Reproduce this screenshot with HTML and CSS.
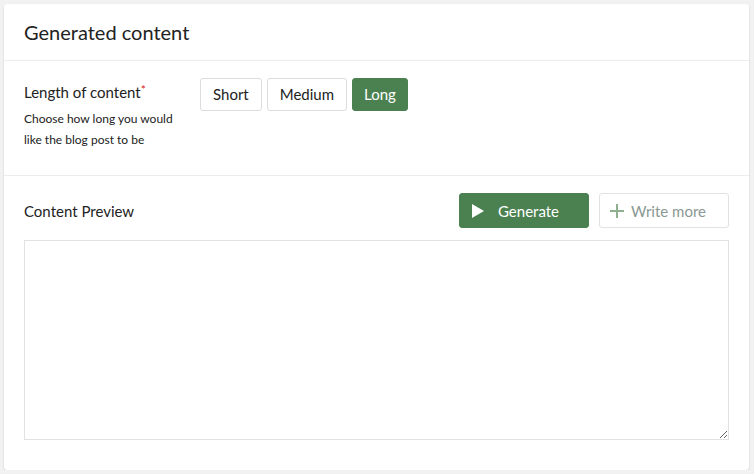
FILE: index.html
```html
<!DOCTYPE html>
<html>
<head>
<meta charset="utf-8">
<link rel="stylesheet" href="styles.css">
</head>
<body>
<div class="card">
  <div class="card-header">Generated content</div>
  <div class="section length">
    <div class="label-col">
      <div class="label">Length of content<span class="req">*</span></div>
      <div class="hint">Choose how long you would like the blog post to be</div>
    </div>
    <div class="options">
      <button class="opt">Short</button>
      <button class="opt">Medium</button>
      <button class="opt active">Long</button>
    </div>
  </div>
  <div class="section preview">
    <div class="preview-head">
      <div class="label">Content Preview</div>
      <div class="actions">
        <button class="btn-generate">
          <svg width="14" height="16" viewBox="0 0 14 16"><path d="M1 1 L13 8 L1 15 Z" fill="#fff"/></svg>
          <span>Generate</span>
        </button>
        <button class="btn-more">
          <svg width="16" height="16" viewBox="0 0 16 16"><path d="M8 1 V15 M1 8 H15" stroke="#8fb08f" stroke-width="2"/></svg>
          <span>Write more</span>
        </button>
      </div>
    </div>
    <textarea class="preview-box"></textarea>
  </div>
</div>
</body>
</html>
```
FILE: styles.css
```css
html, body {
  margin: 0;
  padding: 0;
  background: #f3f2f2;
  font-family: Lato, "Liberation Sans", sans-serif;
  color: #222;
}
body {
  padding: 4px 4px 0 4px;
}
.card {
  width: 745px;
  height: 466px;
  box-sizing: border-box;
  background: #fff;
  border-radius: 3px;
  box-shadow: 0 1px 2px rgba(0,0,0,0.18);
}
.card-header {
  height: 57px;
  box-sizing: border-box;
  padding: 16px 20px 0 20px;
  font-size: 20px;
  line-height: 24px;
  border-bottom: 1px solid #ededed;
}
.section {
  padding: 0 20px;
}
.length {
  display: flex;
  height: 115px;
  box-sizing: border-box;
  padding-top: 17px;
  border-bottom: 1px solid #ededed;
}
.label-col {
  width: 176px;
  padding-top: 4px;
}
.label {
  font-size: 15px;
  line-height: 20px;
  color: #222;
}
.req {
  color: #e02020;
  font-size: 12px;
  vertical-align: top;
  position: relative;
  top: -2px;
}
.hint {
  font-size: 12px;
  line-height: 21px;
  margin-top: 6px;
  color: #222;
  width: 160px;
}
.options {
  display: flex;
  gap: 5px;
  align-items: flex-start;
}
.opt {
  height: 33px;
  padding: 0 12px 2px 12px;
  font-family: Lato, "Liberation Sans", sans-serif;
  font-size: 15px;
  background: #fff;
  color: #222;
  border: 1px solid #dcdcdc;
  border-radius: 3px;
}
.opt.active {
  background: #4b8150;
  border-color: #4b8150;
  color: #fff;
  padding: 0 11px 2px 11px;
}
.preview {
  padding-top: 17px;
}
.preview-head {
  display: flex;
  justify-content: space-between;
  align-items: center;
  height: 35px;
}
.actions {
  display: flex;
  gap: 10px;
}
.btn-generate, .btn-more {
  width: 130px;
  height: 35px;
  display: flex;
  align-items: center;
  border-radius: 3px;
  font-family: Lato, "Liberation Sans", sans-serif;
  font-size: 15px;
  cursor: pointer;
}
.btn-generate {
  background: #4b8150;
  border: 1px solid #4b8150;
  color: #fff;
  padding: 0 0 0 11px;
}
.btn-generate span {
  margin-left: 13px;
}
.btn-more {
  background: #fff;
  border: 1px solid #e2e2e2;
  color: #8a9893;
  padding: 0 0 0 9px;
}
.btn-more span {
  margin-left: 6px;
}
.preview-box {
  display: block;
  width: 100%;
  height: 200px;
  box-sizing: border-box;
  margin-top: 12px;
  border: 1px solid #e2e2e2;
  border-radius: 0;
  resize: vertical;
  font-family: Lato, "Liberation Sans", sans-serif;
}
```
